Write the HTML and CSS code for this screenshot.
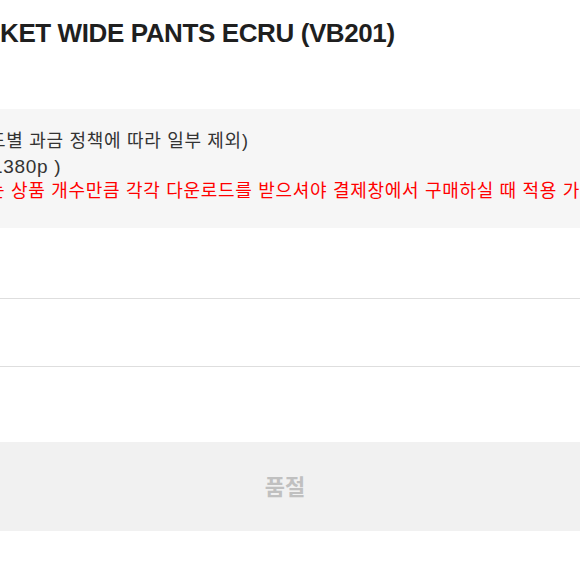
FILE: index.html
```html
<!DOCTYPE html>
<html lang="ko">
<head>
    <meta charset="UTF-8">
    <meta name="viewport" content="width=device-width, initial-scale=1.0">
    <title>WIDE PANTS ECRU (VB201)</title>
    <link rel="stylesheet" href="styles.css">
</head>
<body>

    <div class="detail">
        <!-- Product Title -->
        <h1 class="title">KET WIDE PANTS ECRU (VB201)</h1>

        <!-- Benefit Info -->
        <div class="info">
            <p class="info-line cut-a">드별 과금 정책에 따라 일부 제외)</p>
            <p class="info-line cut-b">1380p )</p>
            <p class="info-line cut-c warn">는 상품 개수만큼 각각 다운로드를 받으셔야 결제창에서 구매하실 때 적용 가능합니다.</p>
        </div>

        <!-- Option Rows -->
        <div class="option-row first"></div>
        <div class="option-row"></div>

        <!-- Buy Button -->
        <button class="soldout" disabled>품절</button>
    </div>

</body>
</html>
```

FILE: styles.css
```css
* {
    margin: 0;
    padding: 0;
    box-sizing: border-box;
}

body {
    font-family: 'Liberation Sans', 'Noto Sans CJK KR', sans-serif;
    color: #222;
    background: #fff;
    overflow: hidden;
}

.detail {
    margin-left: -10px;
    width: 590px;
}

/* Product Title */
.title {
    font-size: 26px;
    font-weight: bold;
    line-height: 32px;
    letter-spacing: -0.4px;
    padding: 17px 0 0 10px;
    height: 109px;
    white-space: nowrap;
    color: #1f1f1f;
}

/* Benefit Info */
.info {
    background: #f6f6f6;
    height: 119px;
    padding-top: 20px;
    white-space: nowrap;
}

.info-line {
    font-size: 18px;
    line-height: 25px;
    letter-spacing: 0.7px;
    color: #333;
}

.cut-a {
    margin-left: -1px;
}

.cut-b {
    margin-left: 2px;
    font-size: 19px;
}

.cut-c {
    margin-left: -2px;
}

.warn {
    color: #ff0000;
}

/* Option Rows */
.option-row {
    height: 68px;
    border-bottom: 1px solid #dedede;
}

.option-row.first {
    height: 71px;
}

/* Buy Button */
.soldout {
    display: block;
    width: 100%;
    height: 89px;
    margin-top: 75px;
    padding-bottom: 3px;
    border: none;
    background: #f1f1f1;
    color: #c0c0c0;
    font-family: 'Noto Sans CJK KR', sans-serif;
    font-size: 22px;
    font-weight: bold;
}
```
